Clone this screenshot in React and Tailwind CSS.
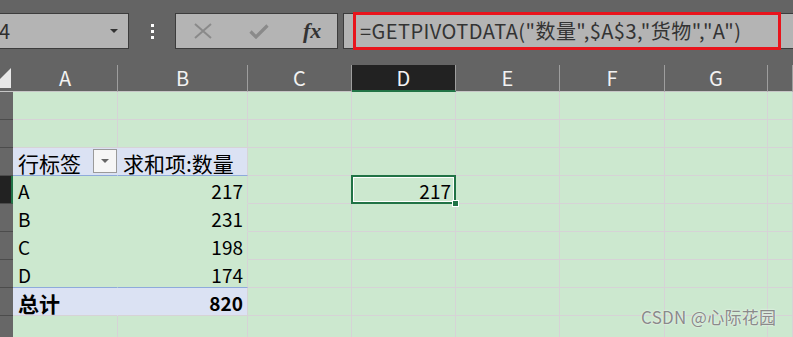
import React from 'react';

const FONT = "font-['Noto_Sans_CJK_SC','Noto_Sans',sans-serif]";

const columns = [
  { key: 'A', w: 'w-[105px]' },
  { key: 'B', w: 'w-[130px]' },
  { key: 'C', w: 'w-[104px]' },
  { key: 'D', w: 'w-[104px]' },
  { key: 'E', w: 'w-[104px]' },
  { key: 'F', w: 'w-[105px]' },
  { key: 'G', w: 'w-[103px]' },
  { key: 'H', w: 'w-[25px]' },
];

const PIVOT = 'bg-[#dbe2f3]';
const GRID = 'border-[#d6d3d6]';

const Cell = ({ w, className = '', children }) => (
  <div className={`${w} h-full shrink-0 border-r border-b box-border flex items-end ${className}`}>
    {children}
  </div>
);

const RowHeader = ({ active }) => (
  <div
    className={`w-[13px] h-full shrink-0 border-b box-border ${
      active ? 'bg-[#222222] border-[#4a4a4a] border-r-2 border-r-[#217346]' : 'bg-[#676767] border-[#4c4c4c]'
    }`}
  />
);

const GridRow = ({ cells = {}, active }) => (
  <div className="flex h-[28px]">
    <RowHeader active={active} />
    {columns.map((c) => {
      const cell = cells[c.key];
      return (
        <Cell key={c.key} w={c.w} className={cell?.className ?? `bg-[#cce8cf] ${GRID}`}>
          {cell?.content}
        </Cell>
      );
    })}
  </div>
);

const Selection = () => (
  <div className="absolute -left-px -top-px -right-px -bottom-px border-2 border-[#217346]">
    <div className="w-full h-full border border-white" />
    <div className="absolute -right-[5px] -bottom-[5px] w-[7px] h-[7px] bg-[#217346] border border-white" />
  </div>
);

const Toolbar = () => (
  <div className="h-[65px] flex items-start pt-[13px] bg-[#646464]">
    <div className="w-[129px] h-[36px] bg-[#b4b4b4] border border-l-0 border-[#3c3c3c] flex items-center justify-between pr-[10px] box-border">
      <span className="text-[20px] text-[#2e2e2e] -ml-[1px] leading-none">4</span>
      <span className="w-0 h-0 border-l-[4px] border-r-[4px] border-t-[4px] border-l-transparent border-r-transparent border-t-[#333]" />
    </div>
    <div className="w-[46px] h-[36px] flex flex-col items-center justify-center gap-[3px]">
      <span className="w-[3px] h-[3px] bg-white" />
      <span className="w-[3px] h-[3px] bg-white" />
      <span className="w-[3px] h-[3px] bg-white" />
    </div>
    <div className="w-[163px] h-[36px] bg-[#b4b4b4] border border-[#3c3c3c] box-border flex items-center">
      <svg width="18" height="16" viewBox="0 0 18 16" className="ml-[18px]">
        <path d="M1 1 L17 15 M17 1 L1 15" stroke="#8a8a8a" strokeWidth="2" fill="none" />
      </svg>
      <svg width="20" height="15" viewBox="0 0 20 15" className="ml-[37px]">
        <path d="M1.5 7.5 L7 13 L18.5 1.5" stroke="#8a8a8a" strokeWidth="3.2" fill="none" />
      </svg>
      <span className="ml-[34px] font-['Liberation_Serif',serif] italic font-bold text-[22px] text-[#333] leading-none">
        fx
      </span>
    </div>
    <div className="ml-[5px] flex-1 h-[36px] bg-[#b4b4b4] border border-r-0 border-[#3c3c3c] box-border">
      <div className="ml-[9px] -mt-[2px] w-[428px] h-[38px] border-[3px] border-[#e8141c] flex items-center pl-[4px] box-border">
        <span className={`${FONT} text-[20px] tracking-[0.45px] text-[#333] whitespace-nowrap leading-none`}>
          =GETPIVOTDATA("数量",$A$3,"货物","A")
        </span>
      </div>
    </div>
  </div>
);

const HeaderRow = () => (
  <div className="flex h-[27px] bg-[#646464]">
    <div className="w-[13px] h-full shrink-0 border-b border-[#c6c6c6] box-border">
      <svg width="13" height="26" viewBox="0 0 13 26">
        <polygon points="11,3 11,23 0,23 0,14" fill="#e8e8e8" />
      </svg>
    </div>
    {columns.map((c) => (
      <div
        key={c.key}
        className={`${c.w} h-full shrink-0 box-border border-r border-r-[#9e9e9e] flex items-center justify-center ${
          c.key === 'D' ? 'bg-[#222222] border-b-2 border-b-[#217346]' : 'border-b border-b-[#c6c6c6]'
        }`}
      >
        {c.key !== 'H' && (
          <span className={`${FONT} text-[20px] text-[#f2f2f2] leading-none`}>{c.key}</span>
        )}
      </div>
    ))}
  </div>
);

const label = (text, bold) => (
  <span className={`${FONT} pl-[5px] pb-[1px] text-[21px] leading-none text-black ${bold ? 'font-bold' : ''}`}>
    {text}
  </span>
);
const letter = (text) => (
  <span className={`${FONT} pl-[5px] pb-[3px] text-[19px] leading-none text-black`}>{text}</span>
);
const num = (text, bold) => (
  <span className={`${FONT} ml-auto pr-[4px] pb-[3px] text-[19px] leading-none text-black ${bold ? 'font-bold' : ''}`}>
    {text}
  </span>
);

const plain = `bg-[#cce8cf] border-[#cce8cf]`;
const plainEdge = `bg-[#cce8cf] border-b-[#cce8cf] border-r-[#d6d3d6]`;

const dataRows = [
  ['A', '217'],
  ['B', '231'],
  ['C', '198'],
  ['D', '174'],
];

export default function App() {
  return (
    <div className={`relative w-[793px] h-[337px] overflow-hidden bg-[#646464] ${FONT}`}>
      <Toolbar />
      <HeaderRow />
      <GridRow />
      <GridRow />
      <GridRow
        cells={{
          A: {
            className: `${PIVOT} border-r-[#dbe2f3] border-b-[#8eaadb]`,
            content: (
              <div className="flex items-end w-full">
                {label('行标签')}
                <span className="ml-[12px] mb-[2px] w-[24px] h-[24px] bg-[#f6f6f6] border border-[#9a9a9a] flex items-center justify-center">
                  <span className="w-0 h-0 border-l-[4px] border-r-[4px] border-t-[4px] border-l-transparent border-r-transparent border-t-[#666]" />
                </span>
              </div>
            ),
          },
          B: {
            className: `${PIVOT} border-r-[#d6d3d6] border-b-[#8eaadb]`,
            content: label('求和项:数量'),
          },
        }}
      />
      {dataRows.map(([k, v], i) => (
        <GridRow
          key={k}
          active={i === 0}
          cells={{
            A: {
              className: i === 3 ? `bg-[#cce8cf] border-r-[#cce8cf] border-b-[#8eaadb]` : plain,
              content: letter(k),
            },
            B: {
              className: i === 3 ? `bg-[#cce8cf] border-r-[#d6d3d6] border-b-[#8eaadb]` : plainEdge,
              content: num(v),
            },
            ...(i === 0
              ? {
                  D: {
                    className: `relative bg-[#cce8cf] ${GRID}`,
                    content: (
                      <>
                        {num('217')}
                        <Selection />
                      </>
                    ),
                  },
                }
              : {}),
          }}
        />
      ))}
      <GridRow
        cells={{
          A: { className: `${PIVOT} border-r-[#dbe2f3] border-b-[#d6d3d6]`, content: label('总计', true) },
          B: { className: `${PIVOT} ${GRID}`, content: num('820', true) },
        }}
      />
      <GridRow />
      <div className={`absolute left-[641px] top-[308px] text-[17px] tracking-[0.3px] leading-none text-[#8a8a8a] [text-shadow:0_0_2px_#ffffff] ${FONT}`}>
        CSDN @心际花园
      </div>
    </div>
  );
}
